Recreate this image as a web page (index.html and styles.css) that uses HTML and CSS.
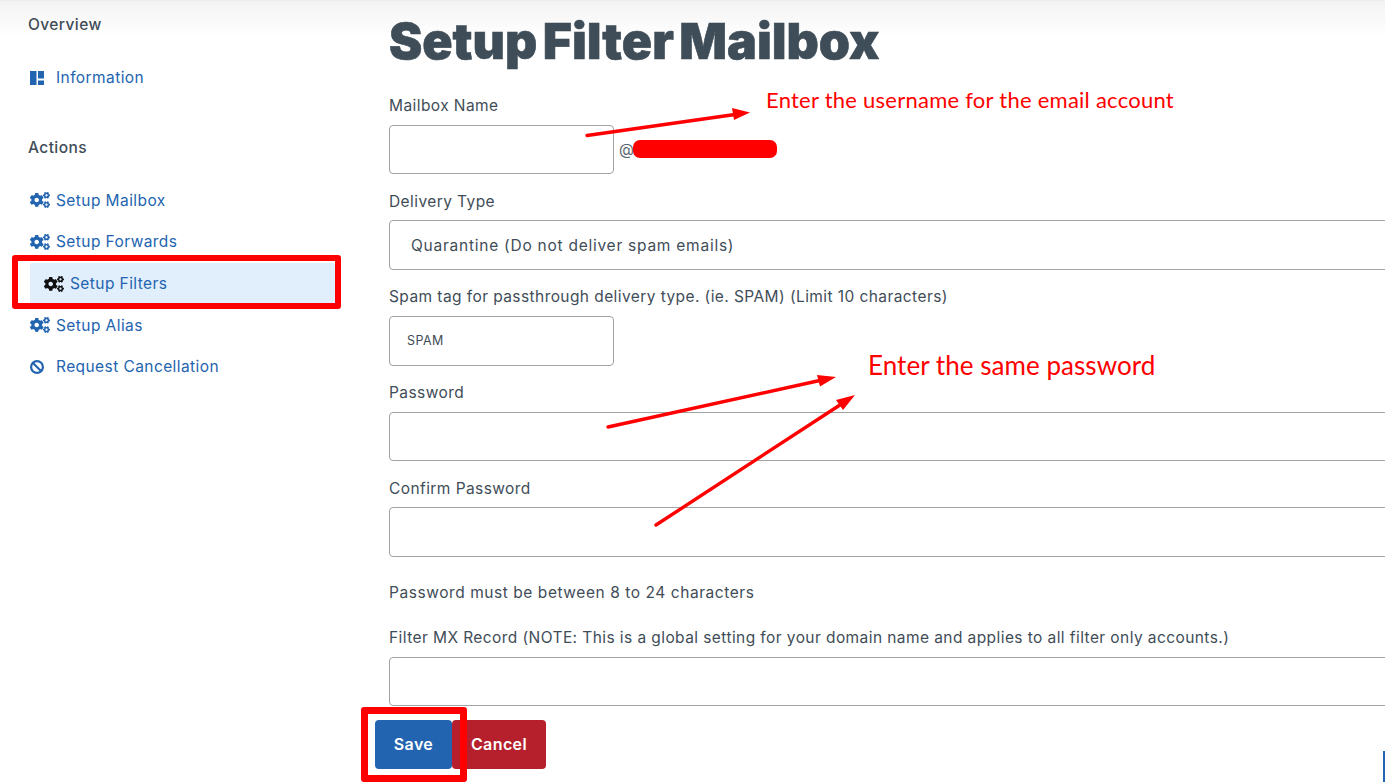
FILE: index.html
```html
<!DOCTYPE html>
<html lang="en">
<head>
    <meta charset="UTF-8">
    <meta name="viewport" content="width=device-width, initial-scale=1.0">
    <title>Setup Filter Mailbox</title>
    <link rel="stylesheet" href="styles.css">
</head>
<body>
    <svg class="defs" width="0" height="0">
        <symbol id="cogs" viewBox="0 0 640 512">
            <path d="M512.1 191l-8.2 14.3c-3 5.3-9.4 7.5-15.1 5.4-11.8-4.4-22.6-10.7-32.1-18.6-4.6-3.8-5.8-10.5-2.8-15.7l8.2-14.3c-6.9-8-12.3-17.3-15.9-27.4h-16.5c-6 0-11.2-4.3-12.2-10.3-2-12-2.1-24.6 0-37.1 1-6 6.2-10.4 12.2-10.4h16.5c3.6-10.1 9-19.4 15.9-27.4l-8.2-14.3c-3-5.2-1.9-11.9 2.8-15.7 9.5-7.9 20.4-14.2 32.1-18.6 5.7-2.1 12.1.1 15.1 5.4l8.2 14.3c10.5-1.9 21.2-1.9 31.7 0L552 6.3c3-5.3 9.4-7.5 15.1-5.4 11.8 4.4 22.6 10.7 32.1 18.6 4.6 3.8 5.8 10.5 2.8 15.7l-8.2 14.3c6.9 8 12.3 17.3 15.9 27.4h16.5c6 0 11.2 4.3 12.2 10.3 2 12 2.1 24.6 0 37.1-1 6-6.2 10.4-12.2 10.4h-16.5c-3.6 10.1-9 19.4-15.9 27.4l8.2 14.3c3 5.2 1.9 11.9-2.8 15.7-9.5 7.9-20.4 14.2-32.1 18.6-5.7 2.1-12.1-.1-15.1-5.4l-8.2-14.3c-10.4 1.9-21.2 1.9-31.7 0zm-10.5-58.8c38.5 29.6 82.4-14.3 52.8-52.8-38.5-29.7-82.4 14.3-52.8 52.8zM386.3 286.1l33.7 16.8c10.1 5.8 14.5 18.1 10.5 29.1-8.9 24.2-26.4 46.4-42.6 65.8-7.4 8.9-20.2 11.1-30.3 5.3l-29.1-16.8c-16 13.7-34.6 24.6-54.9 31.7v33.6c0 11.6-8.3 21.6-19.7 23.6-24.6 4.2-50.4 4.4-75.9 0-11.5-2-20-11.9-20-23.6V418c-20.3-7.2-38.9-18-54.9-31.7L74 403c-10 5.8-22.9 3.6-30.3-5.3-16.2-19.4-33.3-41.6-42.2-65.7-4-10.9.4-23.2 10.5-29.1l33.3-16.8c-3.9-20.9-3.9-42.4 0-63.4L12 205.8c-10.1-5.8-14.6-18.1-10.5-29 8.9-24.2 26-46.4 42.2-65.8 7.4-8.9 20.2-11.1 30.3-5.3l29.1 16.8c16-13.7 34.6-24.6 54.9-31.7V57.1c0-11.5 8.2-21.5 19.6-23.5 24.6-4.2 50.5-4.4 76-.1 11.5 2 20 11.9 20 23.6v33.6c20.3 7.2 38.9 18 54.9 31.7l29.1-16.8c10-5.8 22.9-3.6 30.3 5.3 16.2 19.4 33.2 41.6 42.1 65.8 4 10.9.1 23.2-10 29.1l-33.7 16.8c3.9 21 3.9 42.5 0 63.5zm-117.6 21.1c59.2-77-28.7-164.9-105.7-105.7-59.2 77 28.7 164.9 105.7 105.7zm243.4 182.7l-8.2 14.3c-3 5.3-9.4 7.5-15.1 5.4-11.8-4.4-22.6-10.7-32.1-18.6-4.6-3.8-5.8-10.5-2.8-15.7l8.2-14.3c-6.9-8-12.3-17.3-15.9-27.4h-16.5c-6 0-11.2-4.3-12.2-10.3-2-12-2.1-24.6 0-37.1 1-6 6.2-10.4 12.2-10.4h16.5c3.6-10.1 9-19.4 15.9-27.4l-8.2-14.3c-3-5.2-1.9-11.9 2.8-15.7 9.5-7.9 20.4-14.2 32.1-18.6 5.7-2.1 12.1.1 15.1 5.4l8.2 14.3c10.5-1.9 21.2-1.9 31.7 0l8.2-14.3c3-5.3 9.4-7.5 15.1-5.4 11.8 4.4 22.6 10.7 32.1 18.6 4.6 3.8 5.8 10.5 2.8 15.7l-8.2 14.3c6.9 8 12.3 17.3 15.9 27.4h16.5c6 0 11.2 4.3 12.2 10.3 2 12 2.1 24.6 0 37.1-1 6-6.2 10.4-12.2 10.4h-16.5c-3.6 10.1-9 19.4-15.9 27.4l8.2 14.3c3 5.2 1.9 11.9-2.8 15.7-9.5 7.9-20.4 14.2-32.1 18.6-5.7 2.1-12.1-.1-15.1-5.4l-8.2-14.3c-10.4 1.9-21.2 1.9-31.7 0zM501.6 431c38.5 29.6 82.4-14.3 52.8-52.8-38.5-29.6-82.4 14.3-52.8 52.8z"/>
        </symbol>
    </svg>

    <div class="page">
        <aside class="sidebar">
            <h4 class="side-title">Overview</h4>
            <ul class="side-list side-list-first">
                <li class="side-item">
                    <svg class="icon" viewBox="0 0 14 14"><path d="M0 0h6.500v14H0zM8 0h6v7.500H8zM8 9.500h6v4.500H8z"/></svg>
                    <a href="#">Information</a>
                </li>
            </ul>
            <h4 class="side-title side-title-actions">Actions</h4>
            <ul class="side-list">
                <li class="side-item"><svg class="icon cog"><use href="#cogs"/></svg><a href="#">Setup Mailbox</a></li>
                <li class="side-item"><svg class="icon cog"><use href="#cogs"/></svg><a href="#">Setup Forwards</a></li>
                <li class="side-item active"><svg class="icon cog"><use href="#cogs"/></svg><a href="#">Setup Filters</a></li>
                <li class="side-item"><svg class="icon cog"><use href="#cogs"/></svg><a href="#">Setup Alias</a></li>
                <li class="side-item">
                    <svg class="icon" viewBox="0 0 14 14"><circle cx="7" cy="7" r="5.900" fill="none" stroke="currentColor" stroke-width="2.200"/><path d="M3 3l8 8" fill="none" stroke="currentColor" stroke-width="2.200"/></svg>
                    <a href="#">Request Cancellation</a>
                </li>
            </ul>
        </aside>

        <main class="content">
            <h1>Setup Filter Mailbox</h1>
            <form>
                <div class="field">
                    <label>Mailbox Name</label>
                    <div class="inline">
                        <input class="input input-short" type="text">
                        <span class="domain">@</span>
                    </div>
                </div>
                <div class="field">
                    <label>Delivery Type</label>
                    <div class="input select">Quarantine (Do not deliver spam emails)</div>
                </div>
                <div class="field">
                    <label>Spam tag for passthrough delivery type. (ie. SPAM) (Limit 10 characters)</label>
                    <input class="input input-short input-tag" type="text" value="SPAM">
                </div>
                <div class="field">
                    <label>Password</label>
                    <input class="input" type="password">
                </div>
                <div class="field">
                    <label>Confirm Password</label>
                    <input class="input" type="password">
                </div>
                <p class="hint">Password must be between 8 to 24 characters</p>
                <div class="field">
                    <label>Filter MX Record (NOTE: This is a global setting for your domain name and applies to all filter only accounts.)</label>
                    <input class="input" type="text">
                </div>
                <div class="buttons">
                    <button class="btn btn-save" type="button">Save</button>
                    <button class="btn btn-cancel" type="button">Cancel</button>
                </div>
            </form>
        </main>
    </div>

    <!-- markup drawn over the screenshot -->
    <div class="redact"></div>
    <div class="mark mark-filters"></div>
    <div class="mark mark-save"></div>
    <div class="chat-edge"></div>
    <span class="note note-user">Enter the username for the email account</span>
    <span class="note note-pass">Enter the same password</span>
    <svg class="arrows" width="1385" height="782">
        <g stroke="#f00" stroke-width="3.400" stroke-linecap="round">
            <path d="M587 135.500L735 114.500"/>
            <path d="M608 427L822 380"/>
            <path d="M656 525L843 403"/>
        </g>
        <g fill="#f00">
            <path d="M750 112.500L732 108L734 120z"/>
            <path d="M836 377L817 375L820 386.500z"/>
            <path d="M855 395L836 400L843 410z"/>
        </g>
    </svg>
</body>
</html>
```

FILE: styles.css
```css
* { box-sizing: border-box; }

html, body {
    margin: 0;
    height: 100%;
    overflow: hidden;
}

body {
    font-family: Inter, "Open Sans", sans-serif;
    font-size: 15.500px;
    letter-spacing: 0.420px;
    color: #3f4d58;
    background: linear-gradient(#ececec, #ececec) 0 0 / 100% 1px no-repeat,
                linear-gradient(#f3f3f3, #fff) 0 1px / 100% 36px no-repeat,
                #fff;
}

.defs { position: absolute; }

.page {
    display: flex;
    height: 782px;
}

/* sidebar */
.sidebar {
    width: 389px;
    flex: none;
    padding: 13px 54px 0 12px;
}
.side-title {
    margin: 0 0 0 16px;
    font-size: 15.500px;
    font-weight: 500;
    line-height: 24px;
}
.side-title-actions { margin-top: 37px; }
.side-list {
    list-style: none;
    margin: 20px 0 0 18px;
    padding: 0;
}
.side-item {
    display: flex;
    align-items: center;
    height: 41.600px;
    color: #2364b0;
}
.side-item a {
    color: #2364b0;
    text-decoration: none;
}
.icon {
    width: 14px;
    height: 14px;
    margin-right: 12px;
    fill: currentColor;
    flex: none;
}
.cog {
    width: 20px;
    height: 16px;
    margin-right: 6px;
}
.side-item.active {
    background: #e1eefb;
    padding-left: 14px;
    border-radius: 2px;
}
.side-item.active .icon { color: #111; }

/* form */
.content {
    flex: 1;
    min-width: 0;
}
h1 {
    margin: 13px 0 0;
    font-size: 50px;
    font-weight: 900;
    line-height: 56px;
    letter-spacing: 0;
    word-spacing: -4.500px;
    -webkit-text-stroke: 0.600px #3f4d58;
    color: #3f4d58;
}
form { margin-top: 23.800px; }
.field { margin-bottom: 14px; }
label {
    display: block;
    line-height: 24px;
    padding-top: 1.400px;
    margin-bottom: 8px;
    height: 24px;
}
.inline {
    display: flex;
    align-items: center;
}
.input {
    display: block;
    width: 1020px;
    height: 49.600px;
    border: 1px solid #a3a3a3;
    border-radius: 4px;
    background: #fff;
    font: inherit;
    letter-spacing: inherit;
    color: inherit;
}
.input-short { width: 225px; }
.input-tag {
    padding-left: 17px;
    font-size: 12.500px;
}
.select {
    padding: 15px 21px;
    line-height: 20px;
    letter-spacing: 0.750px;
}
.domain {
    margin-left: 5px;
    color: #5a6670;
}
.hint {
    margin: 23px 0 21px;
    padding-top: 1px;
    height: 24px;
    line-height: 24px;
    letter-spacing: 0.560px;
}
.buttons {
    display: flex;
    margin: 0 0 0 -14px;
}
.btn {
    height: 49px;
    border: none;
    border-radius: 4px;
    padding: 0 0 2px;
    color: #fff;
    font: 600 16px Inter, "Open Sans", sans-serif;
    letter-spacing: 0.400px;
}
.btn-save {
    width: 77px;
    background: #2364b0;
}
.btn-cancel {
    width: 94px;
    background: #b5202c;
}

/* things lying over the page */
.redact {
    position: absolute;
    left: 633px;
    top: 140px;
    width: 144px;
    height: 18px;
    background: #f00;
    border-radius: 7px;
}
.mark {
    position: absolute;
    border: 6px solid #f00;
    border-radius: 3px;
}
.mark-filters {
    left: 12px;
    top: 255px;
    width: 329px;
    height: 54px;
}
.mark-save {
    left: 361px;
    top: 707px;
    width: 106px;
    height: 75px;
    border-width: 7.500px;
}
.chat-edge {
    position: absolute;
    left: 1383px;
    top: 751px;
    width: 2px;
    height: 31px;
    background: #2364b0;
}
.note {
    position: absolute;
    color: #f00;
    font-family: Lato, "Open Sans", sans-serif;
    white-space: nowrap;
}
.note-user {
    left: 766px;
    top: 86px;
    font-size: 22px;
    letter-spacing: 0.250px;
}
.note-pass {
    left: 868px;
    top: 349px;
    font-size: 26px;
    letter-spacing: 0.050px;
}
.arrows {
    position: absolute;
    left: 0;
    top: 0;
    pointer-events: none;
}
```
